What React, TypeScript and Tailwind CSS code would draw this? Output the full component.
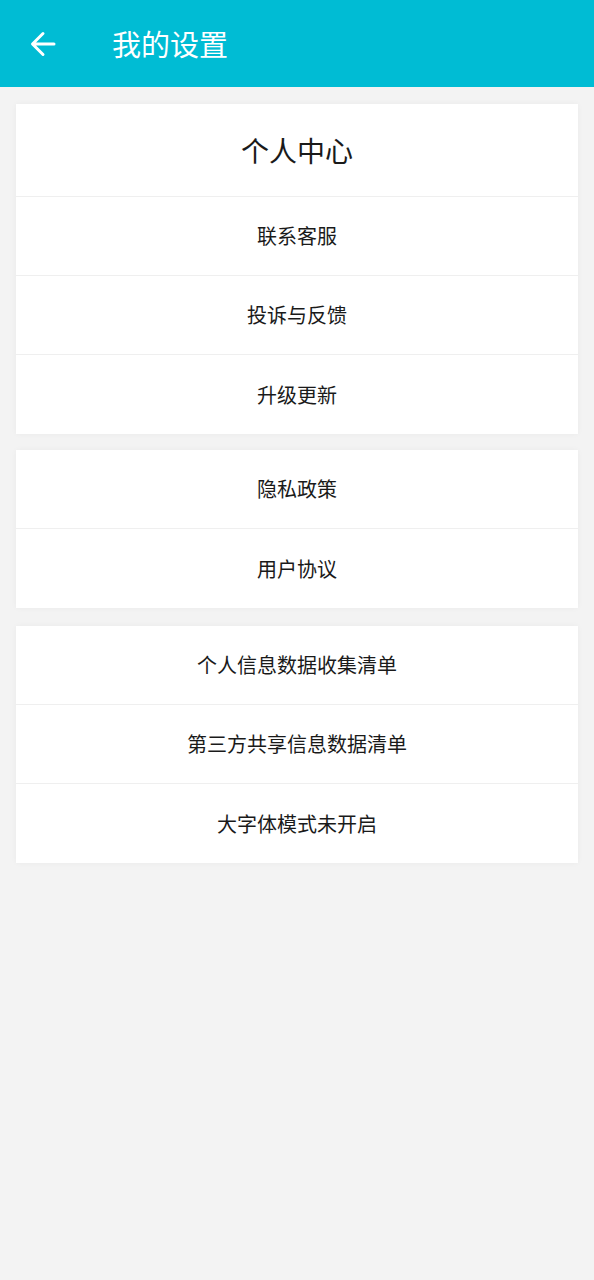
const groups: { label: string; big?: boolean }[][] = [
  [
    { label: '个人中心', big: true },
    { label: '联系客服' },
    { label: '投诉与反馈' },
    { label: '升级更新' },
  ],
  [{ label: '隐私政策' }, { label: '用户协议' }],
  [
    { label: '个人信息数据收集清单' },
    { label: '第三方共享信息数据清单' },
    { label: '大字体模式未开启' },
  ],
];

function BackArrow() {
  return (
    <svg width="28" height="28" viewBox="0 0 28 28" fill="none">
      <path
        d="M25 14H4M14 3.5L3.5 14 14 24.5"
        stroke="white"
        strokeWidth="3"
        strokeLinecap="round"
        strokeLinejoin="round"
      />
    </svg>
  );
}

export default function App() {
  return (
    <div
      className="min-h-[1280px] bg-[#f3f3f3]"
      style={{ fontFamily: '"Noto Sans CJK SC", "Noto Sans", sans-serif' }}
    >
      <header className="h-[87px] bg-[#00bcd4] flex items-center">
        <div className="w-[112px] pl-[29px] flex items-center">
          <BackArrow />
        </div>
        <h1 className="text-white text-[29px] font-normal leading-none">我的设置</h1>
      </header>

      <div className="px-4 pt-[17px] flex flex-col">
        {groups.map((group, gi) => (
          <div
            key={gi}
            className={`bg-white shadow-[0_0_6px_rgba(0,0,0,0.04)] divide-y divide-[#efefef] ${
              gi === 1 ? 'mt-4' : gi === 2 ? 'mt-[18px]' : ''
            }`}
          >
            {group.map((item) => (
              <div
                key={item.label}
                className={`flex items-center justify-center text-[#1a1a1a] ${
                  item.big ? 'h-[93px] text-[28px]' : 'h-[79px] text-[20px]'
                }`}
              >
                {item.label}
              </div>
            ))}
          </div>
        ))}
      </div>
    </div>
  );
}
